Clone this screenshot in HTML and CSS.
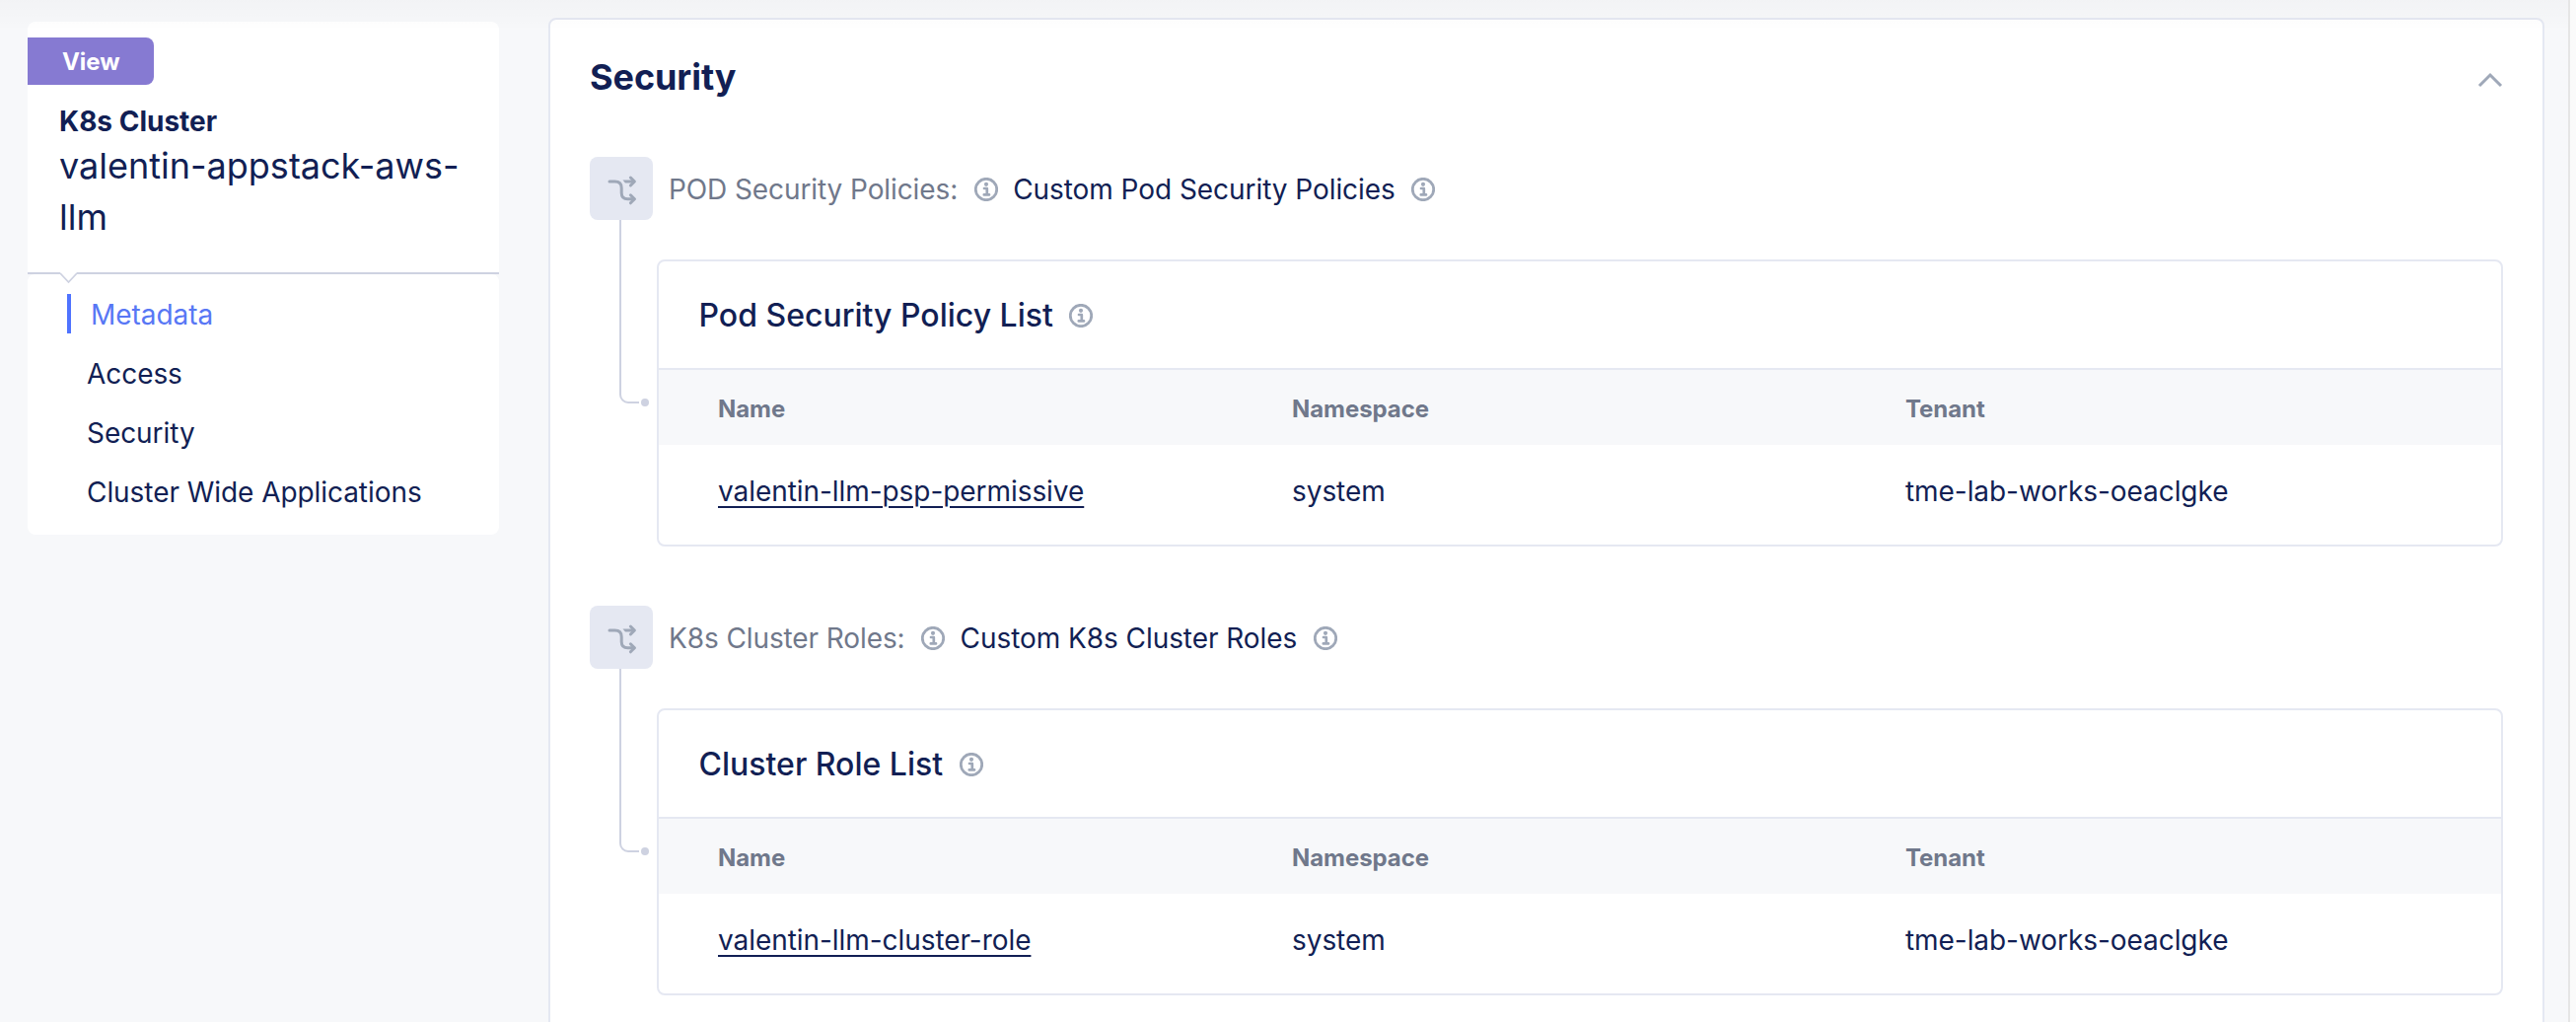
FILE: index.html
```html
<!DOCTYPE html>
<html lang="en">
<head>
<meta charset="utf-8">
<title>K8s Cluster</title>
<link rel="stylesheet" href="styles.css">
</head>
<body>
<svg class="defs" aria-hidden="true">
  <symbol id="info" viewBox="0 0 24 24">
    <circle cx="12" cy="12" r="10.7" fill="none" stroke="currentColor" stroke-width="2.800"/>
    <circle cx="12" cy="6.8" r="2.100" fill="currentColor"/>
    <path d="M10 11h2.8v6.2M9.8 17.4h5.200" fill="none" stroke="currentColor" stroke-width="2.700" stroke-linecap="round" stroke-linejoin="round"/>
  </symbol>
  <symbol id="branch" viewBox="0 0 64 64">
    <g fill="none" stroke="currentColor" stroke-width="3" stroke-linecap="round" stroke-linejoin="round">
      <path d="M20 25h5.500c4.500 0 6.700 2 6.700 6.500v5c0 4.200 2.300 6.300 6.300 6.300H45"/>
      <path d="M41.400 21l4 4-4 4M41.400 38.800l4 4-4 4"/>
    </g>
    <path d="M33.500 23.500H45v3H36z" fill="currentColor"/>
  </symbol>
  <symbol id="connector" viewBox="0 0 68 194">
    <path d="M31 0v177a8 8 0 0 0 8 8h11" fill="none" stroke="currentColor" stroke-width="2"/>
    <circle cx="56" cy="185" r="4" fill="currentColor"/>
  </symbol>
</svg>

<div class="page">
  <aside class="sidebar">
    <div class="summary">
      <span class="badge">View</span>
      <h2 class="kind">K8s Cluster</h2>
      <p class="object-name">valentin-appstack-aws-llm</p>
    </div>
    <svg class="divider" viewBox="0 0 478 12" aria-hidden="true">
      <path d="M0 0h478v8a8 8 0 0 0-8-6H8a8 8 0 0 0-8 6z" fill="#f7f8fa"/>
      <path d="M0 1h33M49.500 1H478" fill="none" stroke="#ced2e1" stroke-width="2"/>
      <path d="M33 0l8.500 9.500L50 0z" fill="#fff"/>
      <path d="M33 1l8.500 9L50 1" fill="none" stroke="#ced2e1" stroke-width="1.800"/>
    </svg>
    <nav class="nav">
      <a class="nav-item active">Metadata</a>
      <a class="nav-item">Access</a>
      <a class="nav-item">Security</a>
      <a class="nav-item">Cluster Wide Applications</a>
    </nav>
  </aside>

  <main class="panel">
    <header class="panel-head">
      <h1>Security</h1>
      <svg class="chevron" viewBox="0 0 26 16" aria-hidden="true"><path d="M2 14L13 3l11 11" fill="none" stroke="currentColor" stroke-width="3"/></svg>
    </header>

    <section class="group">
      <div class="choice">
        <span class="tile"><svg><use href="#branch"/></svg></span>
        <span class="label">POD Security Policies:</span>
        <svg class="info"><use href="#info"/></svg>
        <span class="value">Custom Pod Security Policies</span>
        <svg class="info"><use href="#info"/></svg>
      </div>
      <div class="nested">
        <svg class="connector"><use href="#connector"/></svg>
        <div class="card">
          <div class="card-title"><h3>Pod Security Policy List</h3><svg class="info"><use href="#info"/></svg></div>
          <div class="row head"><span>Name</span><span>Namespace</span><span>Tenant</span></div>
          <div class="row data"><span><a class="link">valentin-llm-psp-permissive</a></span><span>system</span><span>tme-lab-works-oeaclgke</span></div>
        </div>
      </div>
    </section>

    <section class="group">
      <div class="choice">
        <span class="tile"><svg><use href="#branch"/></svg></span>
        <span class="label">K8s Cluster Roles:</span>
        <svg class="info"><use href="#info"/></svg>
        <span class="value">Custom K8s Cluster Roles</span>
        <svg class="info"><use href="#info"/></svg>
      </div>
      <div class="nested">
        <svg class="connector"><use href="#connector"/></svg>
        <div class="card">
          <div class="card-title"><h3>Cluster Role List</h3><svg class="info"><use href="#info"/></svg></div>
          <div class="row head"><span>Name</span><span>Namespace</span><span>Tenant</span></div>
          <div class="row data"><span><a class="link">valentin-llm-cluster-role</a></span><span>system</span><span>tme-lab-works-oeaclgke</span></div>
        </div>
      </div>
    </section>
  </main>
  <div class="gutter"></div>
</div>
</body>
</html>
```
FILE: styles.css
```css
* { box-sizing: border-box; }

body {
  margin: 0;
  background: #f7f8fa;
  color: #121f54;
  font: 400 28px/34px Inter, "Liberation Sans", sans-serif;
  letter-spacing: -0.06px;
}

h1, h2, h3, p { margin: 0; }
svg { display: block; flex: none; }
.defs { display: none; }

.page {
  position: relative;
  display: flex;
  align-items: flex-start;
  height: 1036px;
  overflow: hidden;
}

/* soft shadow cast by the bar above the page */
.page::after {
  content: "";
  position: absolute;
  inset: 0 8px auto 0;
  height: 28px;
  background: linear-gradient(rgba(0, 0, 0, .018), rgba(0, 0, 0, .004));
  pointer-events: none;
}

/* sidebar */
.sidebar {
  width: 478px;
  margin: 22px 50px 0 28px;
  border-radius: 8px;
  background: #fff;
}
.summary { padding: 16px 32px 30px 0; }
.badge {
  display: block;
  width: 128px;
  height: 48px;
  padding-left: 35px;
  border-radius: 0 8px 8px 0;
  background: #867ad2;
  color: #fff;
  font-size: 24px;
  font-weight: 700;
  line-height: 50px;
}
.kind {
  margin: 20px 0 2px 32px;
  font-size: 28px;
  font-weight: 700;
  line-height: 34px;
  letter-spacing: 0;
}
.object-name {
  margin-left: 32px;
  font-size: 36px;
  line-height: 52px;
  letter-spacing: 0;
}
.divider {
  width: 478px;
  height: 12px;
}
.nav { padding: 1px 0 13px; }
.nav-item {
  display: block;
  padding-left: 60px;
  line-height: 60px;
}
.nav-item.active {
  display: flex;
  align-items: center;
  gap: 20px;
  padding-left: 40px;
  color: #5877f5;
}
.nav-item.active::before {
  content: "";
  width: 4px;
  height: 40px;
  margin-bottom: 2px;
  background: #4f73ff;
}

/* main panel */
.panel {
  flex: 1;
  height: 1100px;
  margin-top: 18px;
  padding: 0 40px;
  border: 2px solid #e5e8f2;
  border-radius: 8px;
  background: #fff;
}
.panel-head {
  display: flex;
  align-items: center;
  justify-content: space-between;
  height: 139px;
  padding-bottom: 23px;
}
.panel-head h1 {
  font-size: 36px;
  font-weight: 700;
  line-height: 44px;
}
.chevron {
  width: 26px;
  height: 16px;
  margin: 5px 0 0;
  color: #9fa8b8;
}
.gutter {
  width: 8px;
  height: 1036px;
  margin-left: 24px;
  border-left: 2px solid #e6e6e6;
  background: #fafafa;
}

.group { margin-bottom: 60px; }
.choice {
  display: flex;
  align-items: center;
}
.tile {
  width: 64px;
  height: 64px;
  margin-right: 16px;
  border-radius: 8px;
  background: #e5e8f2;
  color: #9fa8b8;
}
.tile svg { width: 64px; height: 64px; }
.label {
  padding-top: 2px;
  color: #70788b;
  letter-spacing: -0.1px;
}
.value { padding-top: 2px; }
.info {
  width: 24px;
  height: 24px;
  margin: 1px 15.5px 0 16.500px;
  color: #9fa8b8;
  overflow: visible;
}

.nested {
  display: flex;
  align-items: flex-start;
}
.connector {
  width: 68px;
  height: 194px;
  color: #ced2e1;
}

/* list card */
.card {
  flex: 1;
  height: 291px;
  margin-top: 40px;
  border: 2px solid #e5e8f2;
  border-radius: 8px;
  overflow: hidden;
}
.card-title {
  display: flex;
  align-items: center;
  height: 110px;
  padding-left: 40.500px;
  border-bottom: 2px solid #e5e8f2;
}
.card-title h3 {
  padding-top: 2px;
  font-size: 32px;
  font-weight: 500;
  line-height: 40px;
  letter-spacing: 0;
}
.card-title .info { margin-top: 2px; }
.row {
  display: grid;
  grid-template-columns: 582px 622px 1fr;
  padding-left: 60px;
}
.head {
  height: 76px;
  padding-top: 2px;
  background: #f7f8fa;
  color: #70788b;
  font-size: 24px;
  font-weight: 700;
  line-height: 76px;
}
.data { line-height: 94px; }
.link {
  text-decoration: underline;
  text-decoration-thickness: 2px;
  text-underline-offset: 5px;
}
```
